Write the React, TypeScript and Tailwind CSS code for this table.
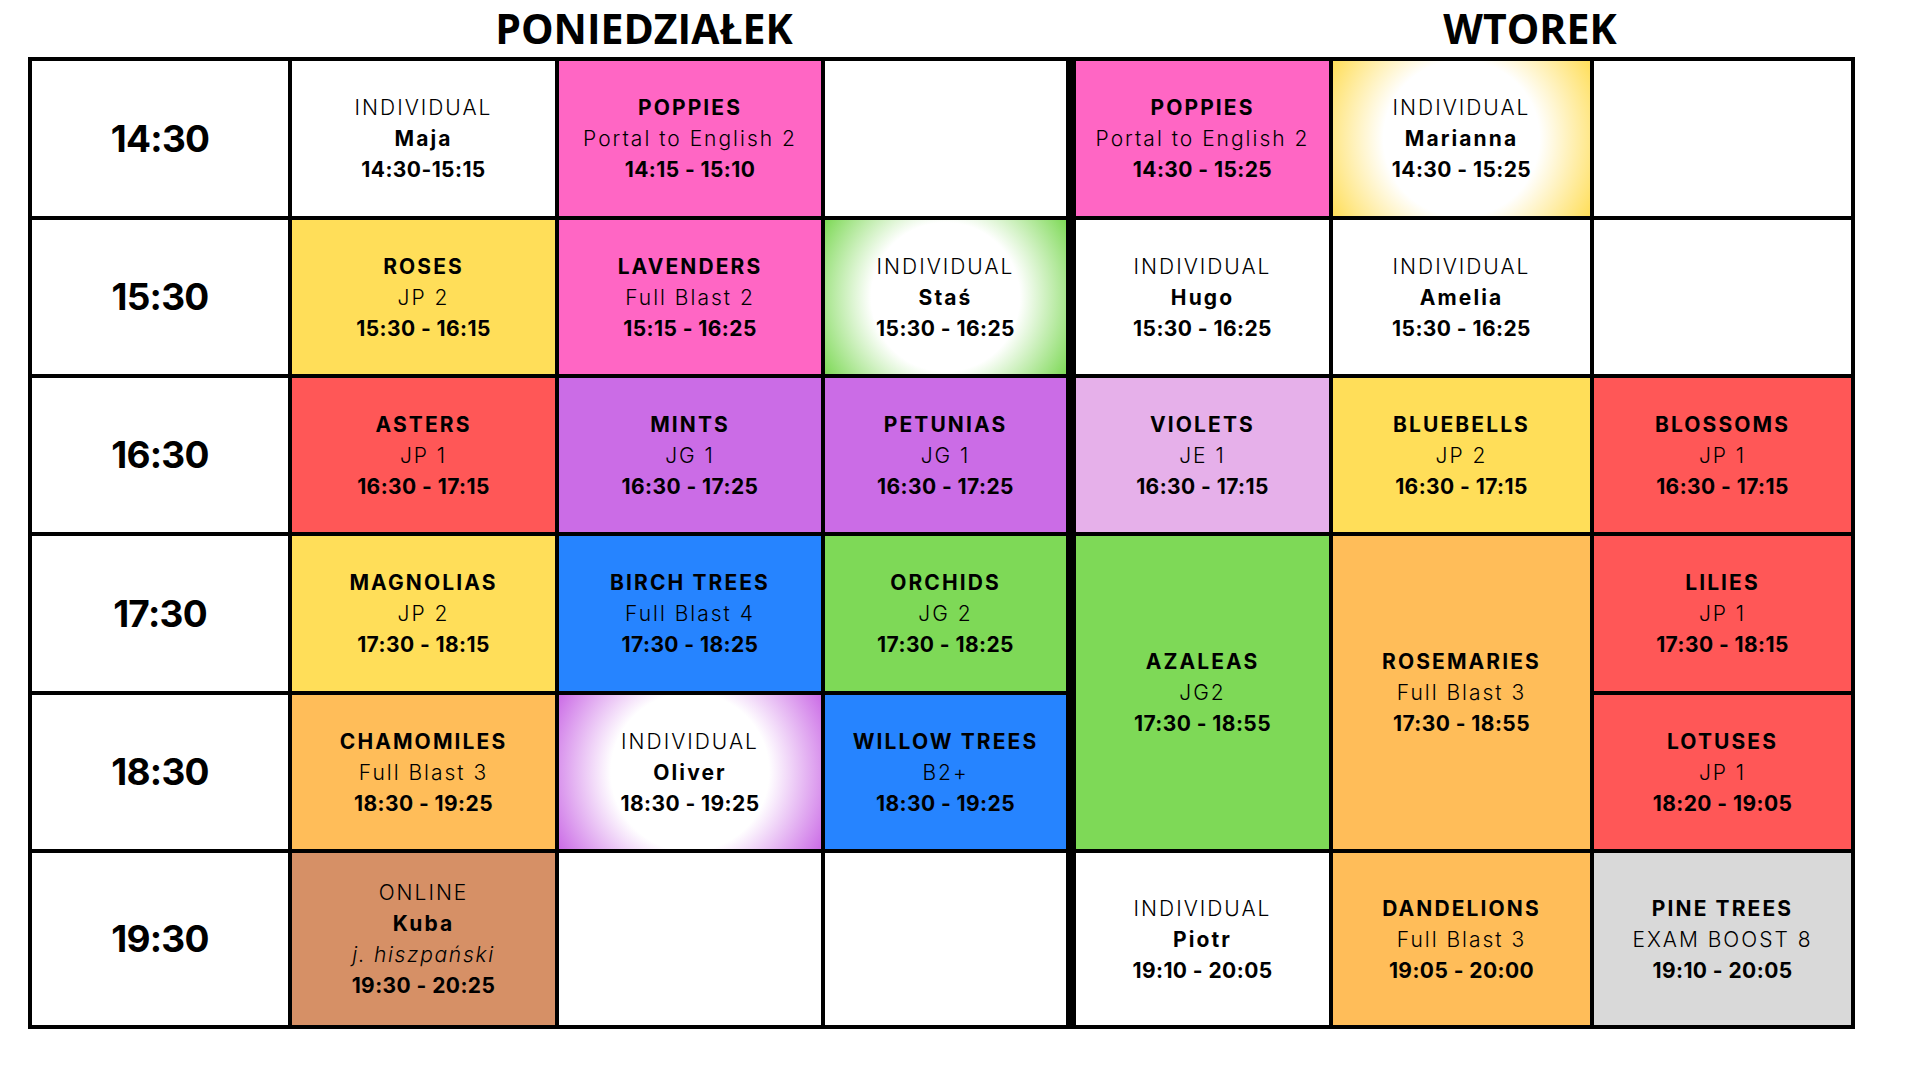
type Line = { t: string; k: "b" | "l" | "i" | "t" };
type Cell = { bg: string; lines: Line[]; span?: boolean };

const PINK = "bg-[#ff66c4]";
const YELLOW = "bg-[#ffde59]";
const RED = "bg-[#ff5757]";
const PURPLE = "bg-[#cb6ce6]";
const LILAC = "bg-[#e6b0ea]";
const BLUE = "bg-[#2684ff]";
const GREEN = "bg-[#7ed957]";
const ORANGE = "bg-[#ffbd59]";
const BROWN = "bg-[#d69066]";
const GRAY = "bg-[#d9d9d9]";
const WHITE = "bg-white";

const group = (name: string, level: string, time: string, bg: string, span?: boolean): Cell => ({
  bg,
  span,
  lines: [
    { t: name, k: "b" },
    { t: level, k: "l" },
    { t: time, k: "t" },
  ],
});

const individual = (who: string, time: string, bg: string): Cell => ({
  bg,
  lines: [
    { t: "INDIVIDUAL", k: "l" },
    { t: who, k: "b" },
    { t: time, k: "t" },
  ],
});

const empty: Cell = { bg: WHITE, lines: [] };

const rows: { hour: string; cells: Cell[] }[] = [
  {
    hour: "14:30",
    cells: [
      individual("Maja", "14:30-15:15", WHITE),
      group("POPPIES", "Portal to English 2", "14:15 - 15:10", PINK),
      empty,
      group("POPPIES", "Portal to English 2", "14:30 - 15:25", PINK),
      individual("Marianna", "14:30 - 15:25", "bg-[radial-gradient(circle,#ffffff_52%,#ffde59_100%)]"),
      empty,
    ],
  },
  {
    hour: "15:30",
    cells: [
      group("ROSES", "JP 2", "15:30 - 16:15", YELLOW),
      group("LAVENDERS", "Full Blast 2", "15:15 - 16:25", PINK),
      individual("Staś", "15:30 - 16:25", "bg-[radial-gradient(circle,#ffffff_52%,#7ed957_100%)]"),
      individual("Hugo", "15:30 - 16:25", WHITE),
      individual("Amelia", "15:30 - 16:25", WHITE),
      empty,
    ],
  },
  {
    hour: "16:30",
    cells: [
      group("ASTERS", "JP 1", "16:30 - 17:15", RED),
      group("MINTS", "JG 1", "16:30 - 17:25", PURPLE),
      group("PETUNIAS", "JG 1", "16:30 - 17:25", PURPLE),
      group("VIOLETS", "JE 1", "16:30 - 17:15", LILAC),
      group("BLUEBELLS", "JP 2", "16:30 - 17:15", YELLOW),
      group("BLOSSOMS", "JP 1", "16:30 - 17:15", RED),
    ],
  },
  {
    hour: "17:30",
    cells: [
      group("MAGNOLIAS", "JP 2", "17:30 - 18:15", YELLOW),
      group("BIRCH TREES", "Full Blast 4", "17:30 - 18:25", BLUE),
      group("ORCHIDS", "JG 2", "17:30 - 18:25", GREEN),
      group("AZALEAS", "JG2", "17:30 - 18:55", GREEN, true),
      group("ROSEMARIES", "Full Blast 3", "17:30 - 18:55", ORANGE, true),
      group("LILIES", "JP 1", "17:30 - 18:15", RED),
    ],
  },
  {
    hour: "18:30",
    cells: [
      group("CHAMOMILES", "Full Blast 3", "18:30 - 19:25", ORANGE),
      individual("Oliver", "18:30 - 19:25", "bg-[radial-gradient(circle,#ffffff_52%,#cb6ce6_100%)]"),
      group("WILLOW TREES", "B2+", "18:30 - 19:25", BLUE),
      group("LOTUSES", "JP 1", "18:20 - 19:05", RED),
    ],
  },
  {
    hour: "19:30",
    cells: [
      {
        bg: BROWN,
        lines: [
          { t: "ONLINE", k: "l" },
          { t: "Kuba", k: "b" },
          { t: "j. hiszpański", k: "i" },
          { t: "19:30 - 20:25", k: "t" },
        ],
      },
      empty,
      empty,
      individual("Piotr", "19:10 - 20:05", WHITE),
      group("DANDELIONS", "Full Blast 3", "19:05 - 20:00", ORANGE),
      group("PINE TREES", "EXAM BOOST 8", "19:10 - 20:05", GRAY),
    ],
  },
];

// Montserrat is wider than Inter for letters, narrower for digits
const lineClass = {
  b: "font-bold tracking-[0.1em]",
  l: "font-light tracking-[0.095em]",
  i: "font-light italic tracking-[0.08em]",
  t: "font-bold tracking-[0.02em]",
};

function Slot({ cell }: { cell: Cell }) {
  return (
    <div
      className={`${cell.bg} ${cell.span ? "row-span-2" : ""} flex flex-col items-center justify-center text-center text-[21px] leading-[31px] text-black`}
    >
      {cell.lines.map((l, i) => (
        <span key={i} className={lineClass[l.k]}>
          {l.t}
        </span>
      ))}
    </div>
  );
}

export default function App() {
  return (
    <div className="min-h-screen w-[1920px] bg-white pl-[28px] font-['Inter',sans-serif]">
      <div className="flex h-[57px] items-start font-['Open_Sans',sans-serif] text-[41px] font-bold leading-[56px] text-black">
        <span className="ml-[416px] w-[400px] text-center">PONIEDZIAŁEK</span>
        <span className="ml-[486px] w-[400px] text-center">WTOREK</span>
      </div>

      <div className="grid w-[1827px] grid-cols-[256px_263px_262px_241px_2px_253px_257px_257px] grid-rows-[155px_154px_154px_155px_154px_172px] gap-[4px] bg-black p-[4px]">
        <div className="col-start-5 row-span-6 row-start-1 bg-black" />
        {rows.map((r) => [
          <div
            key={r.hour}
            className="flex items-center justify-center bg-white text-[37px] font-bold tracking-[-0.02em] text-black"
          >
            {r.hour}
          </div>,
          ...r.cells.map((c, i) => <Slot key={r.hour + i} cell={c} />),
        ])}
      </div>
    </div>
  );
}
